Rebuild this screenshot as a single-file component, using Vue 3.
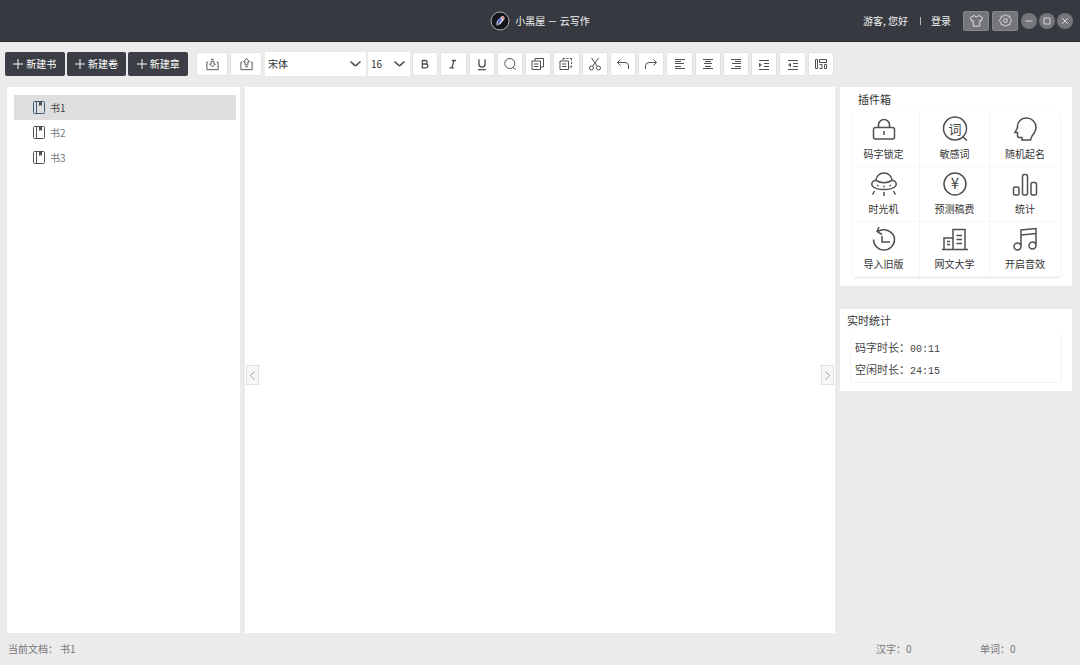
<script setup>
import { ref } from 'vue'

const books = ['书1', '书2', '书3']
const current = ref(0)
const text = ref('')

const creators = ['新建书', '新建卷', '新建章']

const transfers = [
  { name: '导入', d: 'M3.500 5.500H2v8h12v-8h-1.500M6.500 2.500h3M8 10.500l-3-3h1.500v-3h3v3H11z' },
  { name: '导出', d: 'M3.500 5.500H2v8h12v-8h-1.500M6.500 10.500h3M8 1.500l-3 3.500h1.500v3.500h3V5H11z' }
]

const tools = [
  { name: '加粗', bold: true, d: 'M5 4h3.500a2 2 0 0 1 0 4H5zM5 8h4a2.200 2.200 0 0 1 0 4.500H5z' },
  { name: '斜体', bold: true, d: 'M6.500 4h5M4 12.500h5M9.200 4l-2.500 8.500' },
  { name: '下划线', bold: true, d: 'M4.500 2.500v5.500a3.500 3.500 0 0 0 7 0V2.500M3.500 14.500h9' },
  { name: '查找', d: 'M12.800 7.500a5 5 0 1 1-10 0a5 5 0 0 1 10 0M11 11.500l2.500 2' },
  { name: '复制', d: 'M2 5h8.500v8.500H2zM5 5V2.500h8.500v8.500h-3M4 8h4.500M4 10.500h4.500' },
  { name: '粘贴', d: 'M2 5h8.500v8.500H2zM4 8h4.500M4 10.500h4.500M5 4V2.500h2M8.500 2.500h2M12 2.500h1.500v2M13.500 6v2M13.500 9.500v1.500h-2' },
  { name: '剪切', d: 'M4.500 2l6 8.500M11.500 2l-6 8.500M6.500 12a2 2 0 1 1-4 0a2 2 0 0 1 4 0M13.500 12a2 2 0 1 1-4 0a2 2 0 0 1 4 0' },
  { name: '撤销', d: 'M5.500 3.500L2.500 6.500L5.500 9.500M2.500 6.500H10q3.500 0 3.500 3.500v3' },
  { name: '重做', d: 'M10.500 3.500L13.500 6.500L10.500 9.500M13.500 6.500H6q-3.500 0-3.500 3.500v3' },
  { name: '左对齐', d: 'M3 3.500h10M3 5.500h6M3 7.500h9M3 10.500h6M3 12.500h10' },
  { name: '居中', d: 'M3 3.500h10M5 5.500h6M4 7.500h8M5 10.500h6M3 12.500h10' },
  { name: '右对齐', d: 'M3 3.500h10M7 5.500h6M4 7.500h9M7 10.500h6M3 12.500h10' },
  { name: '增加缩进', d: 'M3 4.500h10M8 7.500h5M8 10.500h5M3 13.500h10M3.500 7.500v3L5.500 9z' },
  { name: '减少缩进', d: 'M3 4.500h10M8 7.500h5M8 10.500h5M3 13.500h10M5.500 7.500v3L3.500 9z' },
  { name: '排版', d: 'M2.500 3.500h2v9h-2zM6.500 3.500h7v3h-7zM6.500 8.500h2.500v4H6.500M11.500 8.500h2v4h-2z' }
]

const plugins = [
  { name: '码字锁定', d: 'M4.500 11.500h17a2 2 0 0 1 2 2v7.500a2 2 0 0 1-2 2h-17a2 2 0 0 1-2-2v-7.500a2 2 0 0 1 2-2zM7.500 11.500V9a5.500 5.500 0 0 1 11 0v2.500M13 15v4' },
  { name: '敏感词', glyph: '词', size: 13, d: 'M24.500 12.500a11.500 11.500 0 1 1-23 0a11.500 11.500 0 0 1 23 0M20.500 20.500l4.500 4' },
  { name: '随机起名', d: 'M10 24v-2.500H7q-1.500 0-1.500-1.500v-3.500H3l2.500-5C5 6 9 2 14.500 2S24 6 24 11.500c0 4-2 6-4 8.500L18.500 24z' },
  { name: '时光机', d: 'M5 9.500a8 7.500 0 0 1 16 0M5 9C-2 11 -1 18.500 13 18.500S28 11 21 9M5 9.500q8 4.500 16 0M3.500 20l-2 3.500M13 21v4M22.500 20l2 3.500M6 14.500h1.500M12.200 15.500h1.600M18.500 14.500h1.500' },
  { name: '预测稿费', glyph: '¥', size: 15, d: 'M24 13a11 11 0 1 1-22 0a11 11 0 0 1 22 0' },
  { name: '统计', d: 'M1.500 17.500q0-1.500 1.500-1.500h2.500Q7 16 7 17.500v5q0 1.500-1.500 1.500H3Q1.500 24 1.500 22.500zM10.500 5q0-1.500 1.500-1.500h2q1.500 0 1.500 1.500v17.500q0 1.500-1.500 1.500h-2q-1.500 0-1.500-1.500zM19 13q0-1.500 1.500-1.500h2.500q1.500 0 1.500 1.500v9.500q0 1.500-1.500 1.500h-2.500q-1.500 0-1.500-1.500z' },
  { name: '导入旧版', d: 'M6.500 5.500C14 1 23.500 6 23.500 13.500c0 6-5 10.500-10.500 10.500S2.500 19.500 2.500 13.500M8 1L6 5.500l5 3M11 10v6h8' },
  { name: '网文大学', d: 'M0 23.500h26M2 23.500V12h9M11 23.500V3.500h12v20M14.500 9.500H20M14.500 13.500H20M14.500 17.500H20M5 15.500h3M5 18.500h3' },
  { name: '开启音效', d: 'M9 20.500V4l15-1.500v17M9 9l15-1.500M9 20.500a3.500 3.500 0 1 1-7 0a3.500 3.500 0 0 1 7 0M24 19.500a3.500 3.500 0 1 1-7 0a3.500 3.500 0 0 1 7 0' }
]
</script>

<template>
  <div class="app">
    <header class="titlebar">
      <div class="brand">
        <svg class="logo" viewBox="0 0 20 20" aria-hidden="true">
          <circle cx="10" cy="10" r="9" fill="#15161a" stroke="#aeb0b4" />
          <path d="M6 15l1-5 5-5 2 .5.5 2.500-4 5z" fill="#dfe3f2" />
          <path d="M7 10l4-4 1 3-3 4z" fill="#6e78cf" />
          <path d="M12 5l2 .5.5 2.500-2 .5z" fill="#dc8b6a" />
          <path d="M6 15l3.500-4.500" stroke="#34364b" />
        </svg>
        <span>小黑屋 － 云写作</span>
      </div>
      <div class="account">
        <span>游客, 您好</span>
        <i class="bar"></i>
        <a href="#">登录</a>
        <button class="square shirt" aria-label="皮肤">
          <svg viewBox="0 0 16 16"><path d="M5.500 2.500L1.500 5l1.500 3.500L4.500 8v6h7V8l1.500.5L14.500 5l-4-2.500c-.5 2-4.500 2-5 0z" /></svg>
        </button>
        <button class="square" aria-label="设置">
          <svg viewBox="0 0 16 16"><path d="M8 1.800l2 1.400 2.400.1.600 2.400L14.500 8l-1.500 2.200-.6 2.400-2.400.1-2 1.500-2-1.500-2.400-.1L3 10.200 1.500 8 3 5.700l.6-2.400L6 3.200z" /><circle cx="8" cy="8" r="2" /></svg>
        </button>
        <button class="round" aria-label="最小化"><svg viewBox="0 0 16 16"><path d="M4.500 8h7" /></svg></button>
        <button class="round" aria-label="最大化"><svg viewBox="0 0 16 16"><path d="M5 5h6v6H5z" /></svg></button>
        <button class="round" aria-label="关闭"><svg viewBox="0 0 16 16"><path d="M5 5l6 6M11 5l-6 6" /></svg></button>
      </div>
    </header>

    <div class="toolbar">
      <div class="group creators">
        <button v-for="c in creators" :key="c" class="create">
          <svg viewBox="0 0 10 10"><path d="M5 0v10M0 5h10" /></svg>{{ c }}
        </button>
      </div>
      <div class="group transfers">
        <button v-for="t in transfers" :key="t.name" class="tool" :aria-label="t.name">
          <svg viewBox="0 0 16 16"><path :d="t.d" /></svg>
        </button>
      </div>
      <div class="group selects">
        <div class="picker family">
          <select aria-label="字体"><option>宋体</option><option>黑体</option></select>
          <svg viewBox="0 0 12 8"><path d="M1 1.500l4 3.700q1 .8 2 0l4-3.700" /></svg>
        </div>
        <div class="picker size">
          <select aria-label="字号"><option>16</option><option>18</option></select>
          <svg viewBox="0 0 12 8"><path d="M1 1.500l4 3.700q1 .8 2 0l4-3.700" /></svg>
        </div>
      </div>
      <div class="format">
        <button v-for="t in tools" :key="t.name" class="tool" :class="{ bold: t.bold }" :aria-label="t.name">
          <svg viewBox="0 0 16 16"><path :d="t.d" /></svg>
        </button>
      </div>
    </div>

    <main class="workspace">
      <nav class="books">
        <button v-for="(b, i) in books" :key="b" class="book" :class="{ active: i === current }" @click="current = i">
          <svg viewBox="0 0 14 16"><rect x="1.500" y="1.500" width="11" height="12" rx="1" /><path d="M4.500 1.500v12" /><path class="mark" d="M7 2h3v4L8.500 5 7 6z" /></svg>
          {{ b }}
        </button>
      </nav>
      <section class="editor">
        <textarea v-model="text" aria-label="正文"></textarea>
        <button class="handle left" aria-label="收起左栏"><svg viewBox="0 0 8 12"><path d="M6.500 1.500L1.500 6l5 4.500" /></svg></button>
        <button class="handle right" aria-label="收起右栏"><svg viewBox="0 0 8 12"><path d="M1.500 1.500L6.500 6l-5 4.500" /></svg></button>
      </section>
      <aside class="side">
        <section class="panel plugins">
          <h2>插件箱</h2>
          <div class="grid">
            <button v-for="p in plugins" :key="p.name" class="plugin">
              <svg viewBox="0 0 26 26">
                <path :d="p.d" />
                <text v-if="p.glyph" x="13" y="18" :font-size="p.size" text-anchor="middle">{{ p.glyph }}</text>
              </svg>
              <span>{{ p.name }}</span>
            </button>
          </div>
        </section>
        <section class="panel stats">
          <h2>实时统计</h2>
          <div class="times">
            <p>码字时长：<span>00:11</span></p>
            <p>空闲时长：<span>24:15</span></p>
          </div>
        </section>
      </aside>
    </main>

    <footer class="status">
      <span>当前文档：<b>书1</b></span>
      <span class="count">汉字：<b>0</b></span>
      <span class="count">单词：<b>0</b></span>
    </footer>
  </div>
</template>

<style>
body {
  margin: 0;
}
</style>

<style scoped>
.app {
  display: flex;
  flex-direction: column;
  height: 100vh;
  background: #ebebeb;
  color: #333;
  font: 10px/16px "Noto Sans CJK SC", sans-serif;
}
.app * {
  box-sizing: border-box;
}
button, select, textarea {
  margin: 0;
  padding: 0;
  border: 0;
  background: none;
  color: inherit;
  font: inherit;
}
svg {
  display: block;
  flex: none;
  fill: none;
  stroke: #505050;
}
h2, p {
  margin: 0;
  font-weight: 400;
}
b {
  font-weight: 400;
}

.titlebar {
  display: grid;
  grid-template-columns: 1fr auto 1fr;
  align-items: center;
  height: 42px;
  flex: none;
  background: #36393f;
  border-bottom: 1px solid #29282b;
  color: #f2f2f2;
}
.brand {
  grid-column: 2;
  display: flex;
  align-items: center;
  gap: 5px;
}
.logo {
  width: 20px;
  height: 20px;
  stroke: none;
}
.account {
  display: flex;
  justify-content: flex-end;
  align-items: center;
  padding-right: 7px;
}
.account a {
  color: inherit;
  text-decoration: none;
}
.bar {
  width: 1px;
  height: 8px;
  margin: 0 10px 0 12px;
  background: #b5b6b8;
}
.square {
  display: grid;
  place-items: center;
  width: 26px;
  height: 20px;
  margin-right: 3px;
  border: 1px solid #85878c;
  border-radius: 2px;
  background: #74767b;
}
.shirt {
  margin-left: 12px;
}
.square svg {
  width: 15px;
  height: 15px;
  stroke: #e6e6e6;
}
.round {
  width: 16px;
  height: 16px;
  border-radius: 50%;
  background: #74767b;
}
.round + .round {
  margin-left: 2px;
}
.round svg {
  stroke: #d5d5d5;
}

.toolbar {
  display: flex;
  flex: none;
  padding: 10px 5px 11px;
}
.group {
  display: flex;
  gap: 2px;
}
.transfers {
  margin-left: 8px;
}
.create {
  display: flex;
  flex: 1;
  align-items: center;
  justify-content: center;
  gap: 3px;
  height: 24px;
  border-radius: 2px;
  background: #3b3f45;
  color: #fff;
}
.creators {
  width: 183px;
}
.create svg {
  width: 10px;
  height: 10px;
  stroke: #fff;
}
.tool {
  display: grid;
  place-items: center;
  height: 24px;
  border: 1px solid #e1e1e1;
  border-radius: 2px;
  background: #fff;
}
.tool svg {
  width: 16px;
  height: 16px;
}
.tool.bold svg {
  width: 14px;
  height: 14px;
  stroke-width: 1.5;
}
.transfers .tool {
  width: 32px;
}
.transfers .tool svg {
  width: 15px;
  height: 15px;
}
.selects {
  margin: 0 2px 0 3px;
}
.picker {
  display: grid;
  align-items: center;
  height: 24px;
  background: #fff;
}
.picker > * {
  grid-area: 1 / 1;
}
.picker select {
  width: 100%;
  height: 24px;
  padding-left: 3px;
  appearance: none;
}
.picker svg {
  justify-self: end;
  width: 13px;
  height: 8px;
  margin-right: 4px;
  stroke-width: 1.6;
  pointer-events: none;
}
.family {
  width: 101px;
}
.size {
  width: 42px;
}
.format {
  display: grid;
  grid-template-columns: repeat(15, 1fr);
  gap: 2px;
  width: 422px;
}

.workspace {
  display: grid;
  grid-template-columns: 233px 1fr 232px;
  gap: 5px;
  flex: 1;
  min-height: 0;
  padding: 0 8px 0 7px;
}
.books {
  padding: 8px 4px 0 7px;
  background: #fff;
}
.book {
  display: flex;
  align-items: center;
  gap: 4px;
  width: 100%;
  height: 25px;
  padding-left: 18px;
  color: #777;
}
.book svg {
  width: 14px;
  height: 16px;
}
.book .mark {
  fill: #505050;
  stroke: none;
}
.book.active {
  background: #dedede;
  color: #444;
}
.book.active svg {
  stroke: #3e5a78;
}
.editor {
  position: relative;
  background: #fff;
}
.editor textarea {
  display: block;
  width: 100%;
  height: 100%;
  padding: 16px 24px;
  outline: 0;
  resize: none;
}
.handle {
  position: absolute;
  top: 51%;
  display: grid;
  place-items: center;
  width: 13px;
  height: 20px;
  border: 1px solid #e2e2e2;
  background: #f6f6f6;
}
.handle.left {
  left: 1px;
}
.handle.right {
  right: 1px;
}
.handle svg {
  width: 7px;
  height: 11px;
  stroke: #999;
}
.side {
  display: flex;
  flex-direction: column;
  gap: 23px;
}
.panel {
  background: #fff;
}
h2 {
  font-size: 11px;
}
.plugins {
  padding: 4px 12px 9px 13px;
}
.plugins h2 {
  padding-left: 5px;
  margin-bottom: 5px;
}
.grid {
  display: grid;
  grid-template-columns: 67fr 70fr 70fr;
  border-radius: 3px;
  box-shadow: 0 1px 3px #0000001a;
}
.plugin {
  display: flex;
  flex-direction: column;
  align-items: center;
  gap: 4px;
  height: 55px;
  padding-top: 4px;
  border-right: 1px solid #f5f5f5;
  border-bottom: 1px solid #f5f5f5;
}
.plugin:nth-child(3n) {
  border-right: 0;
}
.plugin:nth-child(3n + 1) {
  padding-right: 5px;
}
.plugin svg {
  width: 26px;
  height: 26px;
  stroke-width: 1.5;
}
.plugin text {
  fill: #444;
  stroke: none;
}
.stats {
  padding: 3px 10px 8px;
}
.stats h2 {
  margin: 0 0 4px -3px;
}
.times {
  padding: 4px 4px 2px;
  border: 1px solid #f4f4f4;
  border-top: 0;
  color: #444;
  line-height: 22px;
}
.times p {
  display: flex;
  align-items: baseline;
  height: 22px;
  font-size: 11px;
}
.times span {
  font-family: "Liberation Mono", monospace;
  font-size: 10px;
}

.status {
  display: flex;
  align-items: center;
  flex: none;
  height: 32px;
  padding: 0 8px;
  color: #777;
}
.status span {
  display: flex;
}
.status span:first-child {
  flex: 1;
  gap: 2px;
}
.count {
  width: 104px;
}
.status .count:last-child {
  width: 92px;
}
</style>
